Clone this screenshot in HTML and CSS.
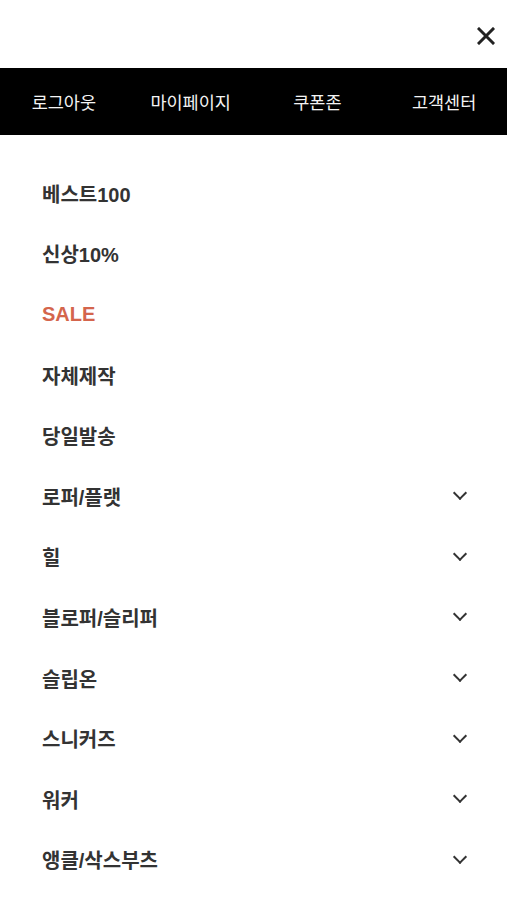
FILE: index.html
```html
<!DOCTYPE html>
<html lang="ko">
<head>
    <meta charset="UTF-8">
    <meta name="viewport" content="width=device-width, initial-scale=1.0">
    <title>메뉴</title>
    <link rel="stylesheet" href="styles.css">
</head>
<body>

    <div class="side-menu">
        <div class="menu-top">
            <button type="button" class="close-btn" aria-label="닫기">
                <svg width="18" height="18" viewBox="0 0 18 18">
                    <path d="M2 2 L16 16 M16 2 L2 16" stroke="#222" stroke-width="3" stroke-linecap="square"/>
                </svg>
            </button>
        </div>

        <ul class="user-links">
            <li><a href="#">로그아웃</a></li>
            <li><a href="#">마이페이지</a></li>
            <li><a href="#">쿠폰존</a></li>
            <li><a href="#">고객센터</a></li>
        </ul>

        <ul class="category-list">
            <li class="category"><a href="#">베스트100</a></li>
            <li class="category"><a href="#">신상10%</a></li>
            <li class="category sale"><a href="#">SALE</a></li>
            <li class="category"><a href="#">자체제작</a></li>
            <li class="category"><a href="#">당일발송</a></li>
            <li class="category has-sub"><a href="#">로퍼/플랫</a><span class="arrow"></span></li>
            <li class="category has-sub"><a href="#">힐</a><span class="arrow"></span></li>
            <li class="category has-sub"><a href="#">블로퍼/슬리퍼</a><span class="arrow"></span></li>
            <li class="category has-sub"><a href="#">슬립온</a><span class="arrow"></span></li>
            <li class="category has-sub"><a href="#">스니커즈</a><span class="arrow"></span></li>
            <li class="category has-sub"><a href="#">워커</a><span class="arrow"></span></li>
            <li class="category has-sub"><a href="#">앵클/삭스부츠</a><span class="arrow"></span></li>
        </ul>
    </div>

</body>
</html>
```

FILE: styles.css
```css
* {
    box-sizing: border-box;
}

body {
    margin: 0;
    background: #fff;
    font-family: "Liberation Sans", "Noto Sans CJK KR", sans-serif;
    color: #333;
}

a {
    color: inherit;
    text-decoration: none;
}

ul {
    list-style: none;
    margin: 0;
    padding: 0;
}

.side-menu {
    width: 100%;
}

/* close button row */
.menu-top {
    height: 68px;
    display: flex;
    justify-content: flex-end;
    align-items: flex-start;
    padding: 27px 12px 0 0;
}

.close-btn {
    background: none;
    border: none;
    padding: 0;
    width: 18px;
    height: 18px;
    cursor: pointer;
    display: flex;
}

/* black bar */
.user-links {
    display: grid;
    grid-template-columns: repeat(4, 1fr);
    height: 67px;
    background: #000;
    align-items: center;
}

.user-links li {
    text-align: center;
    color: #f4f4f4;
    font-size: 17.5px;
    padding-left: 1px;
}

/* categories */
.category-list {
    padding-top: 28px;
}

.category {
    display: flex;
    align-items: center;
    justify-content: space-between;
    height: 60.6px;
    padding: 0 42px 0 42px;
    font-size: 20px;
    font-weight: bold;
    color: #333;
}

.category.sale {
    color: #d4654c;
}

.arrow {
    width: 10px;
    height: 10px;
    border-right: 2px solid #333;
    border-bottom: 2px solid #333;
    transform: rotate(45deg);
    margin-top: -6px;
}
```
